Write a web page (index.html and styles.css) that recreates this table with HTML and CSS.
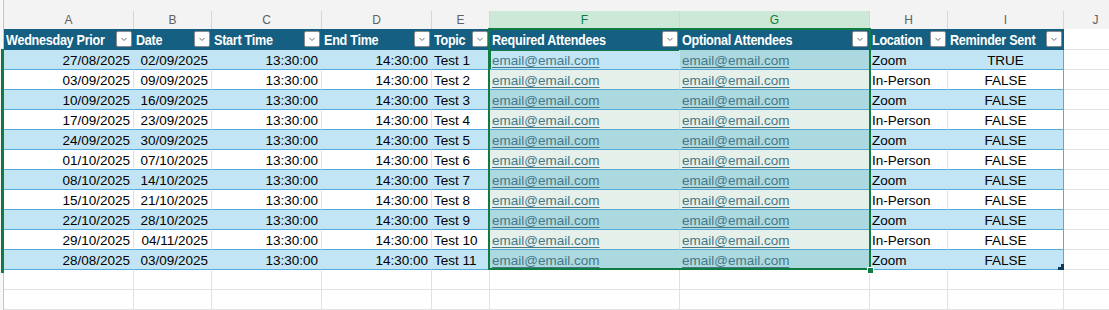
FILE: index.html
```html
<!DOCTYPE html>
<html>
<head>
<meta charset="utf-8">
<link rel="stylesheet" href="styles.css">
</head>
<body>
<div class="sheet">
  <div class="row topband"><div class="c c0"></div><div class="c fill"></div></div>

  <div class="row colhdr">
    <div class="c c0"></div>
    <div class="c">A</div><div class="c">B</div><div class="c">C</div><div class="c">D</div><div class="c">E</div>
    <div class="c hl">F</div><div class="c hl">G</div><div class="c">H</div><div class="c">I</div><div class="c">J</div>
  </div>

  <div class="row thead">
    <div class="c c0"></div>
    <div class="c th"><span>Wednesday Prior</span><i class="fb"><svg width="14" height="14" viewBox="0 0 14 14"><path d="M4.5 6 L7 8.5 L9.5 6" fill="none" stroke="#6b6b6b" stroke-width="1"/></svg></i></div>
    <div class="c th"><span>Date</span><i class="fb"><svg width="14" height="14" viewBox="0 0 14 14"><path d="M4.5 6 L7 8.5 L9.5 6" fill="none" stroke="#6b6b6b" stroke-width="1"/></svg></i></div>
    <div class="c th"><span>Start Time</span><i class="fb"><svg width="14" height="14" viewBox="0 0 14 14"><path d="M4.5 6 L7 8.5 L9.5 6" fill="none" stroke="#6b6b6b" stroke-width="1"/></svg></i></div>
    <div class="c th"><span>End Time</span><i class="fb"><svg width="14" height="14" viewBox="0 0 14 14"><path d="M4.5 6 L7 8.5 L9.5 6" fill="none" stroke="#6b6b6b" stroke-width="1"/></svg></i></div>
    <div class="c th"><span>Topic</span><i class="fb"><svg width="14" height="14" viewBox="0 0 14 14"><path d="M4.5 6 L7 8.5 L9.5 6" fill="none" stroke="#6b6b6b" stroke-width="1"/></svg></i></div>
    <div class="c th"><span>Required Attendees</span><i class="fb"><svg width="14" height="14" viewBox="0 0 14 14"><path d="M4.5 6 L7 8.5 L9.5 6" fill="none" stroke="#6b6b6b" stroke-width="1"/></svg></i></div>
    <div class="c th"><span>Optional Attendees</span><i class="fb"><svg width="14" height="14" viewBox="0 0 14 14"><path d="M4.5 6 L7 8.5 L9.5 6" fill="none" stroke="#6b6b6b" stroke-width="1"/></svg></i></div>
    <div class="c th"><span>Location</span><i class="fb"><svg width="14" height="14" viewBox="0 0 14 14"><path d="M4.5 6 L7 8.5 L9.5 6" fill="none" stroke="#6b6b6b" stroke-width="1"/></svg></i></div>
    <div class="c th"><span>Reminder Sent</span><i class="fb"><svg width="14" height="14" viewBox="0 0 14 14"><path d="M4.5 6 L7 8.5 L9.5 6" fill="none" stroke="#6b6b6b" stroke-width="1"/></svg></i></div>
    <div class="c blank"></div>
  </div>

  <div class="row data band">
    <div class="c c0"></div><div class="c r">27/08/2025</div><div class="c r">02/09/2025</div><div class="c r">13:30:00</div><div class="c r">14:30:00</div><div class="c l">Test 1</div>
    <div class="c l act"><a>email@email.com</a></div><div class="c l sel"><a>email@email.com</a></div><div class="c l">Zoom</div><div class="c ctr edge">TRUE</div><div class="c blank"></div>
  </div>
  <div class="row data">
    <div class="c c0"></div><div class="c r">03/09/2025</div><div class="c r">09/09/2025</div><div class="c r">13:30:00</div><div class="c r">14:30:00</div><div class="c l">Test 2</div>
    <div class="c l sel"><a>email@email.com</a></div><div class="c l sel"><a>email@email.com</a></div><div class="c l">In-Person</div><div class="c ctr edge">FALSE</div><div class="c blank"></div>
  </div>
  <div class="row data band">
    <div class="c c0"></div><div class="c r">10/09/2025</div><div class="c r">16/09/2025</div><div class="c r">13:30:00</div><div class="c r">14:30:00</div><div class="c l">Test 3</div>
    <div class="c l sel"><a>email@email.com</a></div><div class="c l sel"><a>email@email.com</a></div><div class="c l">Zoom</div><div class="c ctr edge">FALSE</div><div class="c blank"></div>
  </div>
  <div class="row data">
    <div class="c c0"></div><div class="c r">17/09/2025</div><div class="c r">23/09/2025</div><div class="c r">13:30:00</div><div class="c r">14:30:00</div><div class="c l">Test 4</div>
    <div class="c l sel"><a>email@email.com</a></div><div class="c l sel"><a>email@email.com</a></div><div class="c l">In-Person</div><div class="c ctr edge">FALSE</div><div class="c blank"></div>
  </div>
  <div class="row data band">
    <div class="c c0"></div><div class="c r">24/09/2025</div><div class="c r">30/09/2025</div><div class="c r">13:30:00</div><div class="c r">14:30:00</div><div class="c l">Test 5</div>
    <div class="c l sel"><a>email@email.com</a></div><div class="c l sel"><a>email@email.com</a></div><div class="c l">Zoom</div><div class="c ctr edge">FALSE</div><div class="c blank"></div>
  </div>
  <div class="row data">
    <div class="c c0"></div><div class="c r">01/10/2025</div><div class="c r">07/10/2025</div><div class="c r">13:30:00</div><div class="c r">14:30:00</div><div class="c l">Test 6</div>
    <div class="c l sel"><a>email@email.com</a></div><div class="c l sel"><a>email@email.com</a></div><div class="c l">In-Person</div><div class="c ctr edge">FALSE</div><div class="c blank"></div>
  </div>
  <div class="row data band">
    <div class="c c0"></div><div class="c r">08/10/2025</div><div class="c r">14/10/2025</div><div class="c r">13:30:00</div><div class="c r">14:30:00</div><div class="c l">Test 7</div>
    <div class="c l sel"><a>email@email.com</a></div><div class="c l sel"><a>email@email.com</a></div><div class="c l">Zoom</div><div class="c ctr edge">FALSE</div><div class="c blank"></div>
  </div>
  <div class="row data">
    <div class="c c0"></div><div class="c r">15/10/2025</div><div class="c r">21/10/2025</div><div class="c r">13:30:00</div><div class="c r">14:30:00</div><div class="c l">Test 8</div>
    <div class="c l sel"><a>email@email.com</a></div><div class="c l sel"><a>email@email.com</a></div><div class="c l">In-Person</div><div class="c ctr edge">FALSE</div><div class="c blank"></div>
  </div>
  <div class="row data band">
    <div class="c c0"></div><div class="c r">22/10/2025</div><div class="c r">28/10/2025</div><div class="c r">13:30:00</div><div class="c r">14:30:00</div><div class="c l">Test 9</div>
    <div class="c l sel"><a>email@email.com</a></div><div class="c l sel"><a>email@email.com</a></div><div class="c l">Zoom</div><div class="c ctr edge">FALSE</div><div class="c blank"></div>
  </div>
  <div class="row data">
    <div class="c c0"></div><div class="c r">29/10/2025</div><div class="c r">04/11/2025</div><div class="c r">13:30:00</div><div class="c r">14:30:00</div><div class="c l">Test 10</div>
    <div class="c l sel"><a>email@email.com</a></div><div class="c l sel"><a>email@email.com</a></div><div class="c l">In-Person</div><div class="c ctr edge">FALSE</div><div class="c blank"></div>
  </div>
  <div class="row data band">
    <div class="c c0"></div><div class="c r">28/08/2025</div><div class="c r">03/09/2025</div><div class="c r">13:30:00</div><div class="c r">14:30:00</div><div class="c l">Test 11</div>
    <div class="c l sel"><a>email@email.com</a></div><div class="c l sel"><a>email@email.com</a></div><div class="c l">Zoom</div><div class="c ctr edge">FALSE</div><div class="c blank"></div>
  </div>

  <div class="row empty">
    <div class="c c0"></div><div class="c"></div><div class="c"></div><div class="c"></div><div class="c"></div><div class="c"></div><div class="c"></div><div class="c"></div><div class="c"></div><div class="c"></div><div class="c"></div>
  </div>
  <div class="row empty">
    <div class="c c0"></div><div class="c"></div><div class="c"></div><div class="c"></div><div class="c"></div><div class="c"></div><div class="c"></div><div class="c"></div><div class="c"></div><div class="c"></div><div class="c"></div>
  </div>

  <div class="selbox"></div>
  <div class="rowsel"></div>
  <div class="handle"></div>
  <svg class="resize" width="6" height="6" viewBox="0 0 6 6"><polygon points="3,0 6,0 6,6 0,6 0,3 3,3" fill="#0e3b5c"/></svg>
</div>
</body>
</html>
```

FILE: styles.css
```css
html, body {
  margin: 0;
  padding: 0;
  overflow: hidden;
  background: #ffffff;
}

.sheet {
  position: relative;
  width: 1128px;
  font-family: "Liberation Sans", Arial, sans-serif;
  color: #000000;
}

.row {
  display: grid;
  grid-template-columns: 4px 130px 78px 110px 110px 58px 190px 190px 78px 116px 64px;
}

.c {
  box-sizing: border-box;
  overflow: hidden;
  white-space: nowrap;
}

/* top strip */
.topband {
  height: 11px;
  background: #f3f3f3;
}
.topband .fill {
  grid-column: 2 / -1;
}
.c0 {
  background: linear-gradient(to right, #f7f7f7 3px, #c6c6c6 3px);
}

/* column letters */
.colhdr {
  height: 18px;
  background: #f3f3f3;
}
.colhdr .c {
  border-right: 1px solid #d6d6d6;
  font-size: 12px;
  line-height: 18px;
  text-align: center;
  color: #616161;
}
.colhdr .c0 {
  border-right: 0;
}
.colhdr .hl {
  background: #cbe9d6;
  color: #107c41;
}

/* table header */
.thead {
  height: 21px;
}
.thead .th {
  background: #156082;
  color: #ffffff;
  font-weight: bold;
  font-size: 14px;
  letter-spacing: -0.3px;
  padding: 1px 2px 0 2px;
  display: flex;
  justify-content: space-between;
  align-items: flex-start;
}
.thead .th span {
  display: block;
  flex: 1 1 auto;
  min-width: 0;
  line-height: 20px;
  transform: scaleX(0.9);
  transform-origin: left center;
}
.fb {
  box-sizing: border-box;
  width: 16px;
  height: 16px;
  margin-top: 1px;
  flex: none;
  background: #ffffff;
  border: 1px solid #8c8c8c;
  border-radius: 2px;
  display: flex;
}
.blank {
  border-right: 1px solid #e1e1e1;
  border-bottom: 1px solid #e1e1e1;
}

/* data rows */
.data {
  height: 20px;
}
.data .c {
  height: 20px;
  font-size: 13.5px;
  line-height: 21px;
  border-right: 1px solid #e1e1e1;
  border-bottom: 1px solid #55aadc;
}
.data .c0 {
  border: 0;
  background: linear-gradient(to right, #f7f7f7 3px, #c6c6c6 3px);
}
.data.band .c {
  background: #c1e5f5;
  border-right-color: #c1e5f5;
}
.data .c.sel {
  background: #e6f0ea;
  border-right-color: #d6dfda;
}
.data.band .c.sel {
  background: #acd8e0;
  border-right-color: #acd8e0;
}
.data .c.edge {
  border-right-color: #55aadc;
}
.data .c.blank {
  background: #ffffff;
  border-right-color: #e1e1e1;
  border-bottom-color: #e1e1e1;
}
.data.band .c0 {
  background: linear-gradient(to right, #f7f7f7 3px, #c6c6c6 3px);
}
.r {
  text-align: right;
  padding-right: 3px;
}
.l {
  padding-left: 2px;
}
.ctr {
  text-align: center;
}
.data a {
  color: #467886;
  text-decoration: underline;
  text-decoration-color: #467886;
  text-underline-offset: 2px;
}
.act {
  box-shadow: inset 1px 1px 0 #107c41;
}

/* empty rows */
.empty {
  height: 20px;
}
.empty .c {
  height: 20px;
  border-right: 1px solid #e1e1e1;
  border-bottom: 1px solid #e1e1e1;
}
.empty .c0 {
  border: 0;
}

/* selection overlay */
.selbox {
  position: absolute;
  left: 488px;
  top: 28px;
  width: 383px;
  height: 242px;
  box-sizing: border-box;
  border: 2px solid #107c41;
  pointer-events: none;
}
.rowsel {
  position: absolute;
  left: 1px;
  top: 49px;
  width: 3px;
  height: 224px;
  background: #107c41;
}
.handle {
  position: absolute;
  left: 867px;
  top: 267px;
  width: 5px;
  height: 5px;
  background: #107c41;
  border: 1px solid #ffffff;
}
.resize {
  position: absolute;
  left: 1058px;
  top: 264px;
  display: block;
}
```
